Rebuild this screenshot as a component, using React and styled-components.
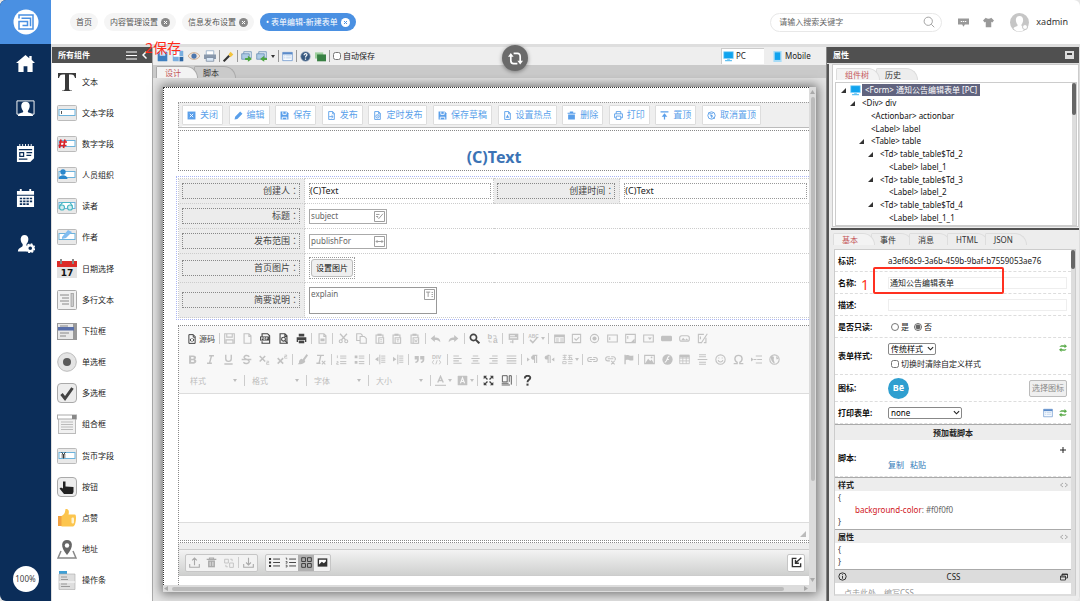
import React, {useState} from 'react';
import styled, {createGlobalStyle} from 'styled-components'

const GlobalStyle = createGlobalStyle`
  * {
    box-sizing: border-box;
  }

  body {
    margin: 0;
    background-color: #e6e6e6;
    color: #222;
    font-family: "Noto Sans", "Noto Sans CJK SC", sans-serif;
    font-size: 8px;
    line-height: 12px;
  }

  button, input, select, textarea {
    font: inherit;
    color: inherit;
    margin: 0;
    padding: 0;
  }

  button {
    border: none;
    background: none;
    white-space: nowrap;
    cursor: pointer;
  }

  svg {
    display: block;
    flex: none;
  }
`

/* ---------- shell ---------- */

const Shell = styled.div`
  display: flex;
  height: 100vh;
  overflow: hidden;
  border-radius: 6px;
  background-color: #dedede;
`

const Rail = styled.nav`
  flex: 0 0 51px;
  display: flex;
  flex-direction: column;
  align-items: center;
  background-color: #0b2d59;
`

const Logo = styled.div`
  width: 100%;
  height: 44px;
  display: flex;
  justify-content: center;
  align-items: center;
  background-color: #4a90e2;
`

const RailMenu = styled.div`
  flex: 1;
  display: flex;
  flex-direction: column;
  gap: 20px;
  padding-top: 7px;
`

const RailButton = styled.button`
  height: 25px;
  color: #fff;
`

const Zoom = styled.button`
  width: 26px;
  height: 26px;
  margin-bottom: 9px;
  border-radius: 50%;
  background-color: #fff;
  color: #444;
`

const Main = styled.div`
  flex: 1;
  min-width: 0;
  display: flex;
  flex-direction: column;
`

const Header = styled.header`
  height: 44px;
  display: flex;
  align-items: center;
  padding: 0 12px 0 19px;
  background-color: #fff;
`

const PageTabs = styled.div`
  flex: 1;
  display: flex;
  gap: 6px;
`

const PageTab = styled.button`
  height: 18px;
  display: flex;
  align-items: center;
  gap: 3px;
  padding: 0 6px;
  border-radius: 9px;
  background-color: ${props => props.$active ? '#4a90e2' : '#f5f5f5'};
  color: ${props => props.$active ? '#fff' : '#555'};
`

const Search = styled.label`
  width: 172px;
  height: 19px;
  display: flex;
  align-items: center;
  padding: 0 6px 0 8px;
  border: 1px solid #e8e8e8;
  border-radius: 10px;
  color: #999;

  input {
    flex: 1;
    min-width: 0;
    border: none;
    outline: none;
    background: none;
  }

  input::placeholder {
    color: #666;
  }
`

const HeaderIcons = styled.div`
  display: flex;
  align-items: center;
  gap: 14px;
  margin: 0 16px;
  color: #999;
`

const User = styled.button`
  display: flex;
  align-items: center;
  gap: 7px;
  font-size: 9px;
  color: #333;
`

const Workspace = styled.div`
  flex: 1;
  min-height: 0;
  display: flex;
  padding-top: 3px;
`

/* ---------- palette ---------- */

const Palette = styled.aside`
  position: relative;
  flex: 0 0 101px;
  display: flex;
  flex-direction: column;
  margin-left: 1px;
  border-right: 1px solid #aaa;
  background-color: #fff;
`

const BarTitle = styled.div`
  height: 16px;
  display: flex;
  align-items: center;
  justify-content: space-between;
  padding: 0 5px 0 6px;
  background-color: #505050;
  color: #fff;
  font-weight: bold;
`

const BarActions = styled.div`
  display: flex;
  gap: 5px;
`

const PaletteList = styled.div`
  flex: 1;
  display: flex;
  flex-direction: column;
  padding: 3px 0 5px;
`

const PaletteItem = styled.button`
  flex: 1;
  display: flex;
  align-items: center;
  gap: 5px;
  padding-left: 5px;
`

const SaveMark = styled.div`
  position: absolute;
  left: 93px;
  top: -7px;
  z-index: 2;
  font-size: 14px;
  line-height: 16px;
  white-space: nowrap;
  color: #ff2a1a;
`

/* ---------- designer ---------- */

const Designer = styled.main`
  position: relative;
  flex: 1;
  min-width: 0;
  display: flex;
  flex-direction: column;
`

const Toolbar = styled.div`
  height: 18px;
  display: flex;
  align-items: center;
  background-color: #eee;
`

const ToolGroup = styled.div`
  height: 12px;
  display: flex;
  align-items: center;
  gap: 4px;
  padding: 0 3px;
  border-left: 1px solid ${props => props.$first ? 'transparent' : '#999'};
`

const Check = styled.label`
  display: flex;
  align-items: center;
  gap: 2px;

  input {
    width: 8px;
    height: 8px;
    accent-color: #666;
  }
`

const Devices = styled.div`
  display: flex;
  gap: 6px;
  margin: 0 12px 0 auto;
`

const Device = styled.button`
  height: 16px;
  display: flex;
  align-items: center;
  gap: 2px;
  width: ${props => props.$active ? '43px' : '44px'};
  padding-left: 2px;
  background-color: ${props => props.$active ? '#fff' : 'transparent'};
  box-shadow: ${props => props.$active ? 'inset 1px 1px 0 #ccc' : 'none'};
`

const Refresh = styled.button`
  position: absolute;
  left: 349px;
  top: -2px;
  width: 26px;
  height: 26px;
  border-radius: 50%;
  background-color: #6a6a6a;
  box-shadow: 0 1px 4px rgba(0, 0, 0, .4);
  color: #fff;
  display: flex;
  align-items: center;
  justify-content: center;
`

const Tabs = styled.div`
  height: 13px;
  flex: none;
  display: flex;
  align-items: flex-end;
  padding-left: ${props => props.$dark ? '3px' : '1px'};
  background-color: ${props => props.$dark ? '#cacaca' : 'transparent'};
`

const Tab = styled.button`
  height: 12px;
  min-width: 42px;
  padding: 0 10px 0 8px;
  margin-right: -4px;
  border: 1px solid ${props => props.$dark ? '#aaa' : '#ddd'};
  border-bottom: none;
  border-radius: 2px 16px 0 0;
  background-color: ${props => props.$active ? '#f3f3f3' : props.$dark ? '#cacaca' : '#ededed'};
  color: ${props => props.$active ? '#c4565a' : '#333'};
  line-height: 11px;
  text-align: left;
  position: relative;
  z-index: ${props => props.$active ? 1 : 0};
`

const Canvas = styled.div`
  flex: 1;
  min-height: 0;
  display: flex;
  padding: 9px 10px 9px;
  background-color: #e4e4e4;
`

const Frame = styled.div`
  flex: 1;
  min-width: 0;
  display: grid;
  grid-template-columns: minmax(0, 1fr) 7px;
  grid-template-rows: minmax(0, 1fr) 7px;
  background-color: #dcdcdc;
  box-shadow: 0 0 10px 2px rgba(0, 0, 0, .5);
`

const Sheet = styled.div`
  display: flex;
  flex-direction: column;
  overflow: hidden;
  padding: 14px 0 0 14px;
  border-top: 1px dotted #333;
  border-left: 1px dotted #333;
  background-color: #fff;
`

const Track = styled.div`
  display: flex;
  flex-direction: ${props => props.$row ? 'row' : 'column'};
  align-items: center;
  padding: 3px 1px;

  svg:last-child {
    margin-top: ${props => props.$row ? '0' : 'auto'};
    margin-left: ${props => props.$row ? 'auto' : '0'};
  }
`

const Thumb = styled.div`
  flex: 0 0 ${props => props.$size};
  width: ${props => props.$row ? 'auto' : '4px'};
  height: ${props => props.$row ? '4px' : 'auto'};
  margin: ${props => props.$row ? '0 4px' : '3px 0'};
  border-radius: 2px;
  background-color: #bbb;
`

const ActionBar = styled.div`
  height: 26px;
  flex: none;
  padding: 2px 3px 0;
  overflow: hidden;
  border-top: 1px dotted #999;
  border-left: 1px dotted #999;
  border-bottom: 1px solid #bbb;
  background-color: #efefef;
`

const Actions = styled.div`
  max-width: 579px;
  display: flex;
  justify-content: space-between;
`

const ActionButton = styled.button`
  height: 20px;
  display: flex;
  align-items: center;
  gap: 4px;
  padding: 0 4px;
  border: 1px solid #ddd;
  border-radius: 1px;
  background-color: #fff;
  color: #5a9fea;
  font-size: 9px;
`

const NextRow = styled.div`
  width: 58px;
  height: 4px;
  margin-top: 1px;
  background-color: #fff;
`

const TitleBox = styled.h1`
  height: 41px;
  flex: none;
  margin: 2px 0 0;
  padding-top: 16px;
  border: 1px dotted #888;
  border-right: none;
  text-align: center;
  font-size: 16px;
  line-height: 20px;
  color: #3b73b5;
`

const TableFrame = styled.div`
  margin: 5px 0 0 -2px;
  padding: 1px 0 1px 1px;
  border: 1px dotted #a9b5f5;
  border-right: none;
`

const FormTable = styled.table`
  width: 100%;
  table-layout: fixed;
  border-collapse: collapse;
`

const FormRow = styled.tr`
  height: ${props => props.$height};
`

const LabelCell = styled.th`
  width: 20%;
  padding: 0 4px 0 3px;
  border: 1px dotted #ccc;
  background-color: #ececec;
  font-weight: normal;
`

const ValueCell = styled.td`
  padding: 0 2px 0 4px;
  border: 1px dotted #ccc;
  border-right: none;
`

const FieldLabel = styled.div`
  height: 16px;
  border: 1px dotted #888;
  text-align: right;
  font-size: 9px;
  line-height: 14px;
  color: #444;
`

/* the colon sits in the middle of its square */
const Colon = styled.span`
  font-family: "Noto Sans CJK TC", sans-serif;
  line-height: 12px;
`

const TextBox = styled.div`
  height: 16px;
  border: 1px dotted #999;
  font-size: 9px;
  line-height: 14px;
`

const Field = styled.div`
  width: ${props => props.$wide ? '128px' : '78px'};
  height: ${props => props.$wide ? '27px' : '15px'};
  display: flex;
  align-items: flex-start;
  border: 1px solid ${props => props.$wide ? '#999' : '#aaa'};
  padding: 1px;
  color: #666;

  input, textarea {
    flex: 1;
    min-width: 0;
    height: 10px;
    border: none;
    outline: none;
    resize: none;
    overflow: hidden;
    background: none;
    line-height: 10px;
  }
`

const PictureBox = styled.div`
  display: inline-block;
  vertical-align: middle;
  padding: 1px;
  border: 1px dotted #999;

  button {
    height: 18px;
    padding: 0 4px;
    border: 1px solid #bbb;
    border-radius: 3px;
    background-color: #efefef;
    line-height: 16px;
    color: #111;
  }
`

/* ---------- rich text editor ---------- */

const Editor = styled.div`
  margin-top: 5px;
  flex: none;
  border: 1px dotted #888;
  border-right: none;
`

const EditorTools = styled.div`
  padding: 2px 0 2px 5px;
  border-bottom: 1px solid #ddd;
  background-color: #f8f8f8;
`

const EditorRow = styled.div`
  height: 21px;
  max-width: ${props => props.$max || 'none'};
  display: flex;
  align-items: center;
`

const EditorButton = styled.button`
  width: 18px;
  height: 18px;
  display: flex;
  align-items: center;
  justify-content: center;
  color: ${props => props.$on ? '#444' : '#c2c2c2'};
`

const SourceButton = styled.button`
  height: 18px;
  width: 34px;
  flex: none;
  display: flex;
  align-items: center;
  gap: 2px;
  padding-left: 3px;
  color: #444;
`

const ColorButton = styled.button`
  width: 22px;
  height: 18px;
  display: flex;
  align-items: center;
  gap: 2px;
  padding-left: 3px;
  color: #c2c2c2;
`

const EditorSep = styled.span`
  flex: none;
  width: 1px;
  height: 11px;
  margin: 0 1px;
  background-color: #ccc;
`

const EditorCombo = styled.button`
  width: 59px;
  display: flex;
  align-items: center;
  justify-content: space-between;
  padding: 0 6px;
  color: #bdbdbd;
`

const EditorBody = styled.div`
  height: 128px;
  background-color: #fff;
`

const EditorStatus = styled.div`
  height: 18px;
  display: flex;
  align-items: flex-end;
  justify-content: flex-end;
  padding: 3px;
  border-top: 1px solid #ddd;
  background-color: #f8f8f8;
`

const Attachments = styled.div`
  flex: 1 0 42px;
  margin-top: 1px;
  padding-top: 6px;
  border-top: 1px dotted #888;
  border-left: 1px dotted #888;
  background: linear-gradient(#ededed 33px, #fff 33px);
`

const AttachBar = styled.div`
  height: 27px;
  display: flex;
  align-items: center;
  gap: 7px;
  padding: 0 4px 0 6px;
  border-top: 1px solid #ccc;
  border-bottom: 1px solid #ccc;
  background: linear-gradient(#f3f3f3, #cfd0cf);
`

const AttachGroup = styled.div`
  height: 18px;
  display: flex;
  align-items: center;
  border: 1px solid #c6c6c6;
  border-radius: 2px;
  background-color: #f2f2f2;

  &:last-child {
    margin-left: auto;
    background-color: #fff;
  }
`

const AttachButton = styled.button`
  width: ${props => props.$loose ? '17px' : '16px'};
  height: 16px;
  display: flex;
  align-items: center;
  justify-content: center;
  color: ${props => props.$off ? '#aaa' : '#333'};
  background-color: ${props => props.$active ? '#b0b0b0' : 'transparent'};
`

/* ---------- properties ---------- */

const Inspector = styled.aside`
  flex: 0 0 254px;
  display: flex;
  flex-direction: column;
  padding-right: 1px;
  border-left: 1px solid #888;
`

const InspectorBody = styled.div`
  flex: 1;
  min-height: 0;
  display: flex;
  flex-direction: column;
  margin-top: 1px;
  padding-left: 3px;
  border-left: 2px solid #555;
  background-color: #ededed;
`

const TreePane = styled.div`
  height: 163px;
  flex: none;
  padding: 2px 1px 2px 2px;
  border: 1px solid #ccc;
  background-color: #fff;
`

const TreeBox = styled.div`
  height: 144px;
  display: flex;
  margin-top: 2px;
  border: 1px solid #ccc;
`

const Tree = styled.ul`
  flex: 1;
  display: flex;
  flex-direction: column;
  margin: 0;
  padding: 1px 0;
  list-style: none;
`

const TreeNode = styled.li`
  flex: 1;
  display: flex;
  align-items: center;
  gap: 7px;
  padding-left: ${props => props.$level * 9 + 5}px;
  white-space: nowrap;
  color: #111;

  svg + svg {
    margin-left: -3px;
  }
`

const TreeLabel = styled.span`
  padding: ${props => props.$selected ? '0 3px' : '0'};
  margin-left: ${props => props.$selected ? '-6px' : '0'};
  background-color: ${props => props.$selected ? '#61647f' : 'transparent'};
  color: ${props => props.$selected ? '#fff' : 'inherit'};
`

const ThinTrack = styled.div`
  flex: 0 0 4px;
  background-color: #ddd;
`

const ThinThumb = styled.div`
  height: ${props => props.$size};
  border-radius: 2px;
  background-color: #666;
`

const Divider = styled.div`
  height: 2px;
  flex: none;
  margin: 1px 0 2px -1px;
  background-color: #505050;
`

const PropBox = styled.div`
  flex: 1;
  min-height: 0;
  display: flex;
  margin: 4px 3px 5px 2px;
  border: 1px solid #ccc;
  border-bottom: 2px solid #ddd;
  background-color: #fff;
`

const Props = styled.div`
  flex: 1;
  min-width: 0;
  overflow: hidden;
`

const PropRow = styled.div`
  position: relative;
  height: ${props => props.$height || '22px'};
  display: grid;
  grid-template-columns: 50px minmax(0, 1fr) auto;
  align-items: center;
  padding: 0 4px 0 3px;
  border-bottom: 1px dashed #ddd;
`

const PropName = styled.span`
  font-weight: bold;
  white-space: nowrap;
  color: #111;
`

const PropInput = styled.input`
  width: 100%;
  height: 12px;
  border: 1px solid #eee;
  padding-left: 1px;
`

const Stack = styled.div`
  display: flex;
  flex-direction: column;
  align-items: flex-start;
  gap: 3px;
`

const Radios = styled.div`
  display: flex;
  gap: 5px;
  padding-left: 3px;
`

const SelectWrap = styled.div`
  width: ${props => props.$width};
  display: grid;
  align-items: center;

  select {
    grid-area: 1 / 1;
    height: 12px;
    padding-left: 2px;
    appearance: none;
    border: 1px solid #888;
    border-radius: 2px;
    background-color: #fff;
    line-height: 10px;
    color: #000;
  }

  svg {
    grid-area: 1 / 1;
    justify-self: end;
    margin-right: 2px;
    pointer-events: none;
  }
`

const RowIcons = styled.div`
  display: flex;
  align-items: center;
  gap: 6px;
`

const RowSwap = styled.div`
  align-self: start;
  padding-top: 6px;
`

const Avatar = styled.div`
  width: 21px;
  height: 21px;
  border-radius: 50%;
  background-color: #2f9fd0;
  color: #fff;
  font-size: 9px;
  font-weight: bold;
  line-height: 20px;
  text-align: center;
`

const PickButton = styled.button`
  height: 17px;
  padding: 0 2px;
  border: 1px solid #bbb;
  border-radius: 2px;
  background-color: #efefef;
  color: #888;
`

const Links = styled.div`
  display: flex;
  gap: 6px;
  padding-top: 14px;

  a {
    color: #337ab7;
    text-decoration: none;
  }
`

const PlusButton = styled.button`
  align-self: start;
  padding-top: 6px;
`

const Section = styled.div`
  height: ${props => props.$center ? '16px' : '14px'};
  display: flex;
  align-items: center;
  justify-content: ${props => props.$center ? 'center' : 'space-between'};
  padding: 0 3px;
  border-top: 1px solid #aaa;
  background-color: ${props => props.$dark ? '#dcdcdc' : '#ededed'};
  font-weight: ${props => props.$dark ? 'normal' : 'bold'};
`

const Code = styled.div`
  padding: 1px 3px;
  line-height: 12px;
  color: #444;
`

const CodeLine = styled.div`
  padding-left: 17px;
  color: #666;

  span {
    color: #d0161b;
  }
`

const Hint = styled.div`
  padding: 4px 9px 0;
  color: #999;
`

const NameMark = styled.div`
  position: absolute;
  left: 38px;
  top: -5px;
  width: 131px;
  height: 27px;
  border: 2px solid #ff3020;
  border-radius: 2px;
  pointer-events: none;
`

const NameNumber = styled.div`
  position: absolute;
  left: 26px;
  top: 5px;
  font-size: 14px;
  line-height: 16px;
  color: #ff3020;
`

/* ---------- drawings ---------- */

const Svg = ({size = 11, box = 16, children, ...rest}) => (
    <svg width={size} height={size} viewBox={`0 0 ${box} ${box}`} fill="none" stroke="currentColor"
         strokeWidth="1.6" {...rest}>{children}</svg>
)

const Caret = ({color = 'currentColor'}) => (
    <svg width="4" height="3" viewBox="0 0 4 3"><path d="M0 0h4L2 3z" fill={color}/></svg>
)

const solid = {fill: 'currentColor', stroke: 'none'}
const glyph = {
    fill: 'currentColor', stroke: 'none', textAnchor: 'middle', fontFamily: 'Liberation Sans', fontWeight: 'bold'
}
const page = <path d="M3 1h7l3 3v11H3zM10 1v4h3"/>
const clip = <><path d="M3 3h10v12H3z"/><path d="M5 1h6v3H5z" {...solid}/></>

const editorIcons = {
    source: <>{page}<path d="M7 7L5 9.500l2 2.500M9 7l2 2.500L9 12"/></>,
    save: <><path d="M1 1h14v14H1zM4 1v5h8V1M3 15v-5h10v5"/></>,
    blank: page,
    pdf: <><path d="M3 6V1h8l3 3v11H3v-3"/><path d="M0 5h13v6H0z" {...solid}/><path d="M2 10V6.500h1.500v1.500H2M5.500 6.500v3h1.500v-3zM9 10V6.500h2M9 8h2" stroke="#f8f8f8" strokeWidth="1"/></>,
    preview: <>{page}<circle cx="8" cy="9" r="2.800"/><path d="M10 11l4 4"/></>,
    print: <><path d="M1 6h14v7h-2v-3H3v3H1zM4 1h8v4H4z" {...solid}/><path d="M4 11h8v4H4z" {...solid}/></>,
    template: <>{page}<path d="M5 8h6v4H5z" {...solid}/></>,
    cut: <><circle cx="4" cy="12" r="2.200"/><circle cx="12" cy="12" r="2.200"/><path d="M5 10l8-9M11 10L3 1" strokeWidth="2"/></>,
    copy: <><path d="M1 1h6l2 2v8H1z"/><path d="M6 5h6l3 3v7H6z" fill="#f8f8f8"/></>,
    paste: <>{clip}<path d="M7 7h7v8H7z" fill="#f8f8f8"/><path d="M9 9.500h3M9 12h3" strokeWidth="1"/></>,
    pasteText: <>{clip}<path d="M6 7h8v8H6z" fill="#f8f8f8"/><path d="M8 9h4M10 9v4" strokeWidth="1.200"/></>,
    pasteWord: <>{clip}<path d="M6 7h8v8H6z" fill="#f8f8f8"/><path d="M8 9l1 4 1-3 1 3 1-4" strokeWidth="1"/></>,
    undo: <path d="M1 8l6-5v3.500c5 0 8 2 8 7-2-3-4-3.500-8-3.500V13z" {...solid}/>,
    redo: <path d="M15 8L9 3v3.500c-5 0-8 2-8 7 2-3 4-3.500 8-3.500V13z" {...solid}/>,
    find: <><circle cx="6.500" cy="6.500" r="4.500" strokeWidth="2.400"/><path d="M10 10l5 5" strokeWidth="3"/></>,
    replace: <><text x="4" y="8" fontSize="11" {...glyph}>b</text><text x="12" y="15" fontSize="12" {...glyph}>a</text><path d="M3 10v3h4M9 4h4v3" strokeWidth="1.200"/></>,
    selectAll: <><path d="M1 1h14v9H1z" {...solid}/><path d="M3 4h7M3 7h10" stroke="#f8f8f8"/><path d="M7 10v5M3 13h5"/></>,
    spell: <><text x="8" y="7" fontSize="7" {...glyph}>ABC</text><path d="M3 10l4 4 7-8" strokeWidth="2.200"/></>,
    form: <><path d="M1 3h14v11H1z"/><path d="M1 3h14v3H1zM3 8h4v1.500H3zM3 11h4v1.500H3zM9 8h5v1.500H9zM9 11h5v1.500H9z" {...solid}/></>,
    checkbox: <><path d="M2 2h12v12H2z"/><path d="M5 8l2.500 2.500L12 6"/></>,
    radio: <><circle cx="8" cy="8" r="6"/><circle cx="8" cy="8" r="3" {...solid}/></>,
    textField: <path d="M1 3h14v10H1zM4 6v4"/>,
    textArea: <><path d="M1 2h14v12H1zM4 4.500v4"/><path d="M14 8v5H9z" {...solid}/></>,
    select: <><path d="M1 3h14v10H1z"/><path d="M7 6.500h6L10 10z" {...solid}/></>,
    button: <rect x="0" y="4" width="16" height="8" rx="2" {...solid}/>,
    imageButton: <><rect x="1" y="4" width="14" height="8" rx="3"/><path d="M3 11l3-4 3 3 2-2 3 3z" {...solid}/></>,
    hidden: <path d="M10 2H2v12h5M13 7v7h-3M15 1L6 15M5 5v4"/>,
    bold: <path d="M3 2h6c5 0 5 5 2.500 5.500C15 8.500 14 14 9.500 14H3zM6 4.300v2.500h2.500c2 0 2-2.500 0-2.500zM6 9v2.700h3c2 0 2-2.700 0-2.700z" fillRule="evenodd" {...solid}/>,
    italic: <path d="M6 2.500h7M3 13.500h7M9.500 2.500l-3 11" strokeWidth="2"/>,
    underline: <path d="M4 1v6c0 5 8 5 8 0V1M2 14.500h12" strokeWidth="2"/>,
    strike: <path d="M12 4C10 1 4 2 4.500 5S12 8 12 11s-6 4-8.500 1M1 8h14" strokeWidth="2"/>,
    sub: <><path d="M1 3l8 8M9 3l-8 8" strokeWidth="2.200"/><path d="M11 10.500h3v2h-3v2.500h4" strokeWidth="1.200"/></>,
    sup: <><path d="M1 6l8 8M9 6l-8 8" strokeWidth="2.200"/><path d="M11 1.500h3v2h-3V6h4" strokeWidth="1.200"/></>,
    brush: <path d="M14 0l2 2-5 7 1 1c0 3-5 5-11 5 1-1 2-2 2-3s0-4 4-5l1 1z" {...solid}/>,
    removeFormat: <><path d="M3 2h10M8.500 2L6 13M2 13.500h6" strokeWidth="2"/><path d="M10 10l5 5M15 10l-5 5"/></>,
    ol: <><path d="M6 3h9M6 6h9M6 11h9M6 14h9" strokeWidth="1.400"/><path d="M2 2v4M1 11h2v2H1v2h3" strokeWidth="1.200"/></>,
    ul: <><path d="M7 3h8M7 6h8M7 11h8M7 14h8" strokeWidth="1.400"/><path d="M1 2h4v4H1zM1 10h4v4H1z" {...solid}/></>,
    outdent: <><path d="M9 3h6M9 6h6M9 9h6M9 12h6M7 1v14" strokeWidth="1.400"/><path d="M5 4v7L0 7.500z" {...solid}/></>,
    indent: <><path d="M9 3h6M9 6h6M9 9h6M9 12h6M7 1v14" strokeWidth="1.400"/><path d="M0 4v7l5-3.500z" {...solid}/></>,
    quote: <path d="M1 3h6v5c0 3-2 5-5 5v-2c1.500 0 2.500-1 2.500-3H1zM9 3h6v5c0 3-2 5-5 5v-2c1.500 0 2.500-1 2.500-3H9z" {...solid}/>,
    div: <><text x="8" y="7" fontSize="8" {...glyph}>DIV</text><path d="M4 9l-2 3 2 3M12 9l2 3-2 3M9 9l-2 6" strokeWidth="1.300"/></>,
    left: <path d="M2 3h8M2 6.500h12M2 10h8M2 13.500h12"/>,
    center: <path d="M4 3h8M2 6.500h12M4 10h8M2 13.500h12"/>,
    right: <path d="M6 3h8M2 6.500h12M6 10h8M2 13.500h12"/>,
    justify: <path d="M1 3h14M1 6.500h14M1 10h14M1 13.500h14"/>,
    ltr: <><path d="M15 2H9v6M11 2v11M14 2v11"/><path d="M11 2H9c-4 0-4 6 0 6h2zM0 5v6l4-3z" {...solid}/></>,
    rtl: <><path d="M8 2H5M6 2v11M9 2v11"/><path d="M6 2H4C0 2 0 8 4 8h2zM15 5v6l-4-3z" {...solid}/></>,
    lang: <path d="M1 2h6M1 5h5M4 1v7M1 8h6M1 11h5v3H1zM9 2h6M11 2v6M9 5h5v3M8 8h8M9 11h6M9 14h6" strokeWidth="1.200"/>,
    link: <path d="M7 5H4C0 5 0 11 4 11h3M9 5h3c4 0 4 6 0 6H9M4 8h8"/>,
    unlink: <path d="M7 4H4C0 4 0 10 4 10h3M9 4h3c3 0 4 4 2 5M4 7h8M9 10l5 5M14 10l-5 5"/>,
    anchor: <path d="M2 1h2v1c4-2 6 2 11 0v7c-5 2-7-2-11 0v6H2z" {...solid}/>,
    image: <><path d="M1 2h14v12H1z"/><path d="M2 13l4-6 3 3 2-2 3 5z" {...solid}/><circle cx="11" cy="5" r="1.300" {...solid}/></>,
    flash: <><circle cx="8" cy="8" r="7.500" {...solid}/><path d="M11 3C7 3 8 12 4 12M7 8h3" stroke="#f8f8f8"/></>,
    table: <><path d="M1 2h14v12H1zM1 6h14M1 10h14M5.500 4v10M10.500 4v10" strokeWidth="1.200"/><path d="M1 1h14v4H1z" {...solid}/></>,
    hr: <path d="M3 1h10M3 4h10M1 8h14M3 12h10M3 15h10" strokeWidth="1.500"/>,
    smile: <><circle cx="8" cy="8" r="6.800"/><path d="M4.500 9c1 3.500 6 3.500 7 0M5.500 5v1.500M10.500 5v1.500"/></>,
    omega: <path d="M1 14h5v-2C1 9 2 2 8 2s7 7 2 10v2h5" strokeWidth="2"/>,
    pageBreak: <><path d="M7 3h9M9 8h7M7 13h9M4 8h4"/><path d="M0 5v6l4-3z" {...solid}/></>,
    globe: <><circle cx="8" cy="8" r="6.800"/><path d="M3 3c3 0 5 1 4 4s2 4 1 7C4 12 2 8 3 3zM10 2c1 3 3 2 4 5l-3 1z" {...solid}/></>,
    maximize: <><path d="M1 1h5L1 6zM15 1v5l-5-5zM1 15v-5l5 5zM15 15h-5l5-5z" {...solid}/><path d="M2 2l4.500 4.500M14 2L9.500 6.500M2 14l4.500-4.500M14 14L9.500 9.500" strokeWidth="2"/></>,
    blocks: <path d="M2 1h7v9H2zM12 1h3v13M12 1v9M1 12h10M1 14.500h12" strokeWidth="1.200"/>,
    help: <><path d="M4 5c0-5 8-5 8-1 0 3-4 3-4 6.500" strokeWidth="2.800"/><path d="M6.500 12.500h3v3h-3z" {...solid}/></>
}

const editorRows = [
    ['save', 'blank', 'pdf!', 'preview!', 'print!', '|', 'template', '|', 'cut', 'copy', 'paste', 'pasteText',
        'pasteWord', '|', 'undo', 'redo', '|', 'find!', 'replace', '|', 'selectAll', '|', 'spell+', '|', 'form',
        'checkbox', 'radio', 'textField', 'textArea', 'select', 'button', 'imageButton', 'hidden'],
    ['bold', 'italic', 'underline', 'strike', 'sub', 'sup', '|', 'brush', 'removeFormat', '|', 'ol', 'ul', '|',
        'outdent', 'indent', '|', 'quote', 'div', '|', 'left', 'center', 'right', 'justify', '|', 'ltr', 'rtl',
        'lang+', '|', 'link', 'unlink', 'anchor', '|', 'image', 'flash', 'table', 'hr', 'smile', 'omega',
        'pageBreak', 'globe']
]

const actionIcons = {
    close: <><rect x="1" y="1" width="14" height="14" {...solid}/><path d="M5 5l6 6M11 5l-6 6" stroke="#fff"/></>,
    edit: <path d="M1 15l1-5L11 1l4 4-9 9zM3 11l2 2" {...solid}/>,
    save: <><path d="M1 1h11l3 3v11H1z" {...solid}/><path d="M5 1v5h6V1M4 15v-4h8v4" stroke="#fff"/></>,
    publish: <>{page}<path d="M4 10h6M8 7.500l3 2.500-3 2.500"/></>,
    timer: <>{page}<circle cx="8" cy="9.500" r="3"/><path d="M8 8v2h1.500" strokeWidth="1"/></>,
    hot: <>{page}<path d="M8 6l3 6H5z" {...solid}/></>,
    remove: <path d="M1 3h4V1h6v2h4v2H1zM2 6h12v9H2z" {...solid}/>,
    print: <><path d="M4 5V1h8v4M4 12H1V5h14v7h-3"/><path d="M4 9h8v6H4z"/></>,
    top: <><path d="M1 1.500h14M8 15V6" strokeWidth="2.200"/><path d="M8 4l5 6H3z" {...solid}/></>,
    untop: <><circle cx="8" cy="8" r="6.500"/><path d="M5 4.500h6M8 13V7M2 3l12 11" strokeWidth="1.200"/><path d="M8 6l3 3.500H5z" {...solid}/></>
}

const actions = [
    ['close', '关闭'], ['edit', '编辑'], ['save', '保存'], ['publish', '发布'], ['timer', '定时发布'],
    ['save', '保存草稿'], ['hot', '设置热点'], ['remove', '删除'], ['print', '打印'], ['top', '置顶'], ['untop', '取消置顶']
]

const plate = (
    <>
        <rect x=".5" y="2.500" width="19" height="15" rx="1" fill="#e9e9e9" stroke="#bbb"/>
        <rect x="2" y="6.500" width="16" height="6" fill="#fff" stroke="#6db3dc"/>
    </>
)
const key = <rect x=".5" y=".5" width="19" height="19" rx="3.500" fill="#ededed" stroke="#aaa"/>

const paletteIcons = {
    text: <path d="M1 1h18v5h-1c-.7-2.500-1.500-3.500-4-3.500h-2V16c0 2 .5 2.500 3 2.500V19H5v-.5c2.500 0 3-.5 3-2.500V2.500H6C3.500 2.500 2.700 3.500 2 6H1z" fill="#3a3a3a"/>,
    field: <>{plate}<path d="M4.500 8v3" stroke="#555"/></>,
    number: <>{plate}<path d="M4 5.500L2.500 14M8 5.500L6.500 14M2 8h8M1.500 11.500h8" stroke="#d8232a" strokeWidth="1.700"/></>,
    people: <>{plate}<circle cx="6" cy="7" r="2.700" fill="#2b87cc"/><path d="M1.500 14c0-5 9-5 9 0z" fill="#2b87cc"/></>,
    reader: <>{plate}<g stroke="#4cb8c4" strokeWidth="1.200" fill="#d3eef1"><circle cx="5" cy="11.500" r="2.500"/><circle cx="13" cy="11.500" r="2.500"/><path d="M2.500 10l3-3.500h7.500l2.500 3.500" fill="none"/></g></>,
    author: <>{plate}<path d="M5 10l6-7 4 2-6 6-4 1z" fill="#82bdf0"/></>,
    date: <><path d="M0 3h20v16H0z" fill="#e3e3e3"/><path d="M0 2h20v6H0z" fill="#dc2b27"/><path d="M4 0v5M16 0v5" stroke="#888" strokeWidth="2"/><text x="10" y="17" fontSize="9" fontWeight="bold" textAnchor="middle" fontFamily="DejaVu Sans" fill="#111">17</text></>,
    area: <><rect x=".5" y=".5" width="19" height="19" rx="1" fill="#f1f1f1" stroke="#aaa"/><path d="M3 5h9M5 8h7M3 11h9M5 14h7" stroke="#888"/><rect x="14" y="3.500" width="2.500" height="13" fill="#ccc" stroke="#999" strokeWidth=".7"/></>,
    drop: <><rect x=".5" y="2.500" width="19" height="16" fill="#e8e8e8" stroke="#999"/><path d="M16 3h3.500v15H16z" fill="#999"/><path d="M1 6h16v3.500H1z" fill="#586ea8"/><path d="M3 5h8M3 12h9M3 15h6" stroke="#888"/></>,
    radio: <><circle cx="10" cy="10" r="9.300" fill="#e4e4e4" stroke="#bbb"/><circle cx="10" cy="10" r="4" fill="#5a5a5a"/></>,
    check: <>{key}<path d="M4.500 11l3.500 4.500L15.500 5" stroke="#444" strokeWidth="3" fill="none"/></>,
    combo: <><rect x="1.500" y="3" width="17" height="16.500" fill="#f1f1f1" stroke="#bbb"/><rect x=".5" y="1" width="19" height="4" fill="#fff" stroke="#aaa"/><path d="M15 1h4v4h-4z" fill="#888"/><path d="M4 8h12M4 10.500h12M4 13h12M4 15.500h12" stroke="#bbb"/></>,
    money: <>{plate}<path d="M4.500 6l2 3 2-3M6.500 9v3.500M4.500 9h4M4.500 11h4" stroke="#333" strokeWidth=".9" fill="none"/></>,
    button: <>{key}<path d="M6 4.500h2.500v5l8 .5v5l-1 2H7l-4.500-5.500 1.500-1 2 1z" fill="#222"/></>,
    like: <><path d="M1 8h4v10H1z" fill="#f0a040"/><path d="M4.500 8C8 6 8 4 8.500 1c3-.5 4 2 3 5.500H18c2 0 1 12-2 12H4.500z" fill="#fcc54e"/><rect x="14.500" y="9.500" width="2.500" height="6" rx="1" fill="#fff3cf"/></>,
    address: <><path d="M4 12l-3 7h18l-3-7" stroke="#888" fill="none" strokeWidth="1.500"/><path d="M10 16C3 8 4 1 10 1s7 7 0 15z" fill="#666"/><circle cx="10" cy="6.500" r="2.200" fill="#fff"/></>,
    ops: <><path d="M2 1h8v4H2z" fill="#3fa0d6"/><path d="M2 4h16v15.500H2z" fill="#dedede" stroke="#aaa" strokeWidth=".6"/><path d="M4 7h6M4 9.500h7M4 14h6M4 16.500h9" stroke="#888" strokeWidth=".8"/><path d="M2 12h16" stroke="#fff"/></>
}

const palette = [
    ['text', '文本'], ['field', '文本字段'], ['number', '数字字段'], ['people', '人员组织'], ['reader', '读者'],
    ['author', '作者'], ['date', '日期选择'], ['area', '多行文本'], ['drop', '下拉框'], ['radio', '单选框'],
    ['check', '多选框'], ['combo', '组合框'], ['money', '货币字段'], ['button', '按钮'], ['like', '点赞'],
    ['address', '地址'], ['ops', '操作条']
]

const railIcons = {
    主页: <path d="M10 1L0 9.500h2.500V19H8v-6h4v6h5.500V9.500H20L16.500 6V2H14v2.500z" fill="#fff"/>,
    用户: <><path d="M1 2h18v14H1z" fill="none" stroke="#fff"/><path d="M10 3c6 0 5 7 2.500 9.500v1.500c2 1 5 1 5.500 4H2c.5-3 3.500-3 5.500-4v-1.500C5 10 4 3 10 3z" fill="#fff"/></>,
    新闻: <><path d="M1 2h18v13l-4 4H1z" fill="#fff"/><path d="M3 6h14M11 9h6M11 12h5M3 16h9" stroke="#0b2d59" strokeWidth="1.300"/><path d="M4 9h4v4H4z" fill="#fff" stroke="#0b2d59" strokeWidth="1.300"/><path d="M4 0v3M7 0v3M10 0v3M13 0v3M16 0v3" stroke="#fff"/></>,
    日历: <><path d="M1 2h18v4H1zM1 7h18v12H1z" fill="#fff"/><path d="M5 0v4M15 0v4" stroke="#fff" strokeWidth="2"/><path d="M4 10h2.500M7.500 10H10M11 10h2.500M14.500 10H17M4 13h2.500M7.500 13H10M11 13h2.500M14.500 13H17M4 16h2.500M7.500 16H10M11 16h2.500" stroke="#0b2d59" strokeWidth="1.800"/></>,
    账户: <><path d="M9 1c5 0 5 7 2 9.500v1.500l1 1c-1 2 0 4 1 5.500H2c0-4 3-4 5-6v-2C4 8 4 1 9 1z" fill="#fff"/><circle cx="15" cy="15" r="3" fill="none" stroke="#fff" strokeWidth="2.200"/><circle cx="15" cy="15" r="4.500" fill="none" stroke="#fff" strokeWidth="1.500" strokeDasharray="2 1.530"/></>
}

const tools = {
    save: <><rect x="1" y="1" width="14" height="14" rx="1" fill="#3e7fc0"/><path d="M4 1h8v6H4z" fill="#cfe3f5"/></>,
    saveAs: <><rect x="1" y="1" width="14" height="14" rx="1" fill="#79aee0"/><path d="M2 2h8v7H2zM9 8h6v7H9z" fill="#fff"/><path d="M10 9h5v6h-5z" fill="#2c66a3"/></>,
    eye: <><path d="M0 8c4-6 12-6 16 0-4 6-12 6-16 0z" fill="#f2e6dc" stroke="#c39b7b"/><circle cx="8" cy="8" r="3.500" fill="#4d76ad"/></>,
    print: <><path d="M3 1h10v6H3z" fill="#fff" stroke="#8aa4c0"/><path d="M0 6h16v6H0z" fill="#8a99ac"/><path d="M3 10h10v5H3z" fill="#d9e7f5" stroke="#718399"/></>,
    wand: <><path d="M1 15l8-8" stroke="#333" strokeWidth="3"/><path d="M8 5l3-4 4 4-4 4z" fill="#f2c33d"/></>,
    next: <><path d="M4 1h11v9H4z" fill="#dfe9f3" stroke="#5b84ae"/><path d="M1 4h11v8H1z" fill="#aecbe5" stroke="#5b84ae"/><path d="M6 10h4V7l6 4.500-6 4V13H6z" fill="#4da643"/></>,
    prev: <><path d="M4 1h11v9H4z" fill="#dfe9f3" stroke="#5b84ae"/><path d="M1 4h11v8H1z" fill="#aecbe5" stroke="#5b84ae"/><path d="M16 10h-4V7l-6 4.500 6 4V13h4z" fill="#4da643"/></>,
    form: <><path d="M1 2h14v12H1z" fill="#f7fbff" stroke="#5b8bc9"/><path d="M1 2h14v3H1z" fill="#5b8bc9"/><path d="M3 7h2M3 10h2M6 7h7M6 10h7" stroke="#a9c3e2"/></>,
    help: <><circle cx="8" cy="8" r="7" fill="#36587f" stroke="#a9b6c6"/><path d="M6 6c0-3 5-2.500 4 0-.5 1.300-2 1.300-2 3.500M8 11v1.800" stroke="#fff" strokeWidth="1.800" fill="none"/></>,
    stack: <><path d="M0 2h12v9H0z" fill="#9fd09f"/><path d="M3 5h13v10H3z" fill="#388043"/></>,
    pc: <><path d="M1 1h14v10H1z" fill="#10a3ee" stroke="#8fd6fa"/><path d="M6 12h4v1h3v2H3v-2h3z" fill="#62c1f2"/></>,
    mobile: <><path d="M2 0h12v16H2z" fill="#a7dcf7"/><path d="M4 2h8v11H4z" fill="#10a3ee"/></>,
    swap: <><path d="M1 6c1-4 6-4 10-3V0l5 4.500-5 4V6C7 5 4 5 1 6z" fill="#5aab4a"/><path d="M15 10c-1 4-6 4-10 3v3l-5-4.500 5-4V10c4 1 7 1 10 0z" fill="#5aab4a"/></>
}

const Tool = ({name, size = 11}) => <Svg size={size} stroke="none" strokeWidth="1">{tools[name]}</Svg>

const attachIcons = {
    up: <path d="M1 10v5h14v-5M8 12V2M4.500 5L8 1.500 11.500 5"/>,
    trash: <><path d="M1 3.500h14M5 3V1.500h6V3"/><path d="M3 5h10v10H3z" {...solid}/><path d="M6 7v6M10 7v6" stroke="#f2f2f2" strokeWidth="1.200"/></>,
    swap: <path d="M1 2h6v6H1zM9 8h6v7H9zM10 2h3v3M3 11v3h3"/>,
    down: <path d="M1 10v5h14v-5M8 1v10M4.500 8L8 11.500 11.500 8"/>,
    ul: <><path d="M6 3h10M6 8h10M6 13h10" strokeWidth="1.300"/><path d="M0 1.500h3v3H0zM0 6.500h3v3H0zM0 11.500h3v3H0z" {...solid}/></>,
    ol: <><path d="M6 3h10M6 8h10M6 13h10" strokeWidth="1.300"/><path d="M1 1.500h1.500V4M1 6.500h2V9H1M1 12h2v2.500H1" strokeWidth="1"/></>,
    grid: <path d="M1 1h5.500v5.500H1zM9.500 1H15v5.500H9.500zM1 9.500h5.500V15H1zM9.500 9.500H15V15H9.500z" strokeWidth="1.300"/>,
    image: <><path d="M1 2h14v12H1z" {...solid}/><path d="M3 4h10v2L10 9 7 7l-4 4z" fill="#fff" stroke="none"/></>,
    shrink: <path d="M8 2H2v12h12V9M15 1L7 8.500M6.500 4v5h5" strokeWidth="2"/>
}

const treeNodes = [
    [0, '<Form> 通知公告编辑表单 [PC]', true], [1, '<Div> div', true], [2, '<Actionbar> actionbar'],
    [2, '<Label> label'], [2, '<Table> table', true], [3, '<Td> table_table$Td_2', true], [4, '<Label> label_1'],
    [3, '<Td> table_table$Td_3', true], [4, '<Label> label_2'], [3, '<Td> table_table$Td_4', true],
    [4, '<Label> label_1_1']
]

/* ---------- parts ---------- */

const CloseDot = ({active}) => (
    <svg width="9" height="9" viewBox="0 0 18 18">
        <circle cx="9" cy="9" r="9" fill={active ? '#fff' : '#888'}/>
        <path d="M6 6l6 6M12 6l-6 6" stroke={active ? '#4a90e2' : '#fff'} strokeWidth="2"/>
    </svg>
)

const Choice = ({options, width, label}) => (
    <SelectWrap $width={width}>
        <select aria-label={label}>
            {options.map(o => <option key={o}>{o}</option>)}
        </select>
        <svg width="7" height="7" viewBox="0 0 8 8"><path d="M1 2.500l3 3 3-3" fill="none" stroke="#222" strokeWidth="1.300"/></svg>
    </SelectWrap>
)

const FormLabel = ({children}) => (
    <LabelCell scope="row"><FieldLabel>{children}<Colon>：</Colon></FieldLabel></LabelCell>
)

const FieldIcon = ({children}) => (
    <Svg size={11} stroke="#999" strokeWidth="1.400"><path d="M.7.700h14.600v14.600H.700z"/>{children}</Svg>
)

const TopHeader = () => (
    <Header>
        <PageTabs>
            <PageTab>首页</PageTab>
            <PageTab>内容管理设置<CloseDot/></PageTab>
            <PageTab>信息发布设置<CloseDot/></PageTab>
            <PageTab $active>• 表单编辑-新建表单<CloseDot active/></PageTab>
        </PageTabs>
        <Search>
            <input placeholder="请输入搜索关键字" aria-label="搜索"/>
            <Svg size={12} strokeWidth="1.200"><circle cx="7" cy="7" r="5.500"/><path d="M11 11l4 4"/></Svg>
        </Search>
        <HeaderIcons>
            <Svg><path d="M0 2h16v9H10l-2 3-2-3H0z" {...solid}/><path d="M4 6.500h2M7 6.500h2M10 6.500h2" stroke="#fff"/></Svg>
            <Svg><path d="M4 1c2 2 6 2 8 0l4 4-2.500 3L12 7v8H4V7L2.500 8 0 5z" {...solid}/></Svg>
        </HeaderIcons>
        <User>
            <svg width="19" height="19" viewBox="0 0 19 19">
                <circle cx="9.500" cy="9.500" r="9.500" fill="#c6c6c6"/>
                <path d="M9.500 3c5 0 4 7 2 8.500v1.500c2 .5 3.500 1 4 2.500-3 4-9 4-12 0 .5-1.500 2-2 4-2.500v-1.500C5.500 10 4.500 3 9.500 3z" fill="#fff"/>
                <circle cx="15" cy="14" r="2.500" fill="#fff" stroke="#c6c6c6"/>
            </svg>
            xadmin
        </User>
    </Header>
)

const FormArea = () => (
    <TableFrame>
        <FormTable>
            <tbody>
            <FormRow $height="25px">
                <FormLabel>创建人</FormLabel>
                <ValueCell><TextBox>(C)Text</TextBox></ValueCell>
                <FormLabel>创建时间</FormLabel>
                <ValueCell><TextBox>(C)Text</TextBox></ValueCell>
            </FormRow>
            <FormRow $height="25px">
                <FormLabel>标题</FormLabel>
                <ValueCell colSpan="3">
                    <Field>
                        <input defaultValue="subject" aria-label="标题"/>
                        <FieldIcon><path d="M5 9l2 2 6-7M3 5h5M3 8h3"/></FieldIcon>
                    </Field>
                </ValueCell>
            </FormRow>
            <FormRow $height="25px">
                <FormLabel>发布范围</FormLabel>
                <ValueCell colSpan="3">
                    <Field>
                        <input defaultValue="publishFor" aria-label="发布范围"/>
                        <FieldIcon><path d="M3 8h10M5 6L3 8l2 2M11 6l2 2-2 2"/></FieldIcon>
                    </Field>
                </ValueCell>
            </FormRow>
            <FormRow $height="29px">
                <FormLabel>首页图片</FormLabel>
                <ValueCell colSpan="3"><PictureBox><button>设置图片</button></PictureBox></ValueCell>
            </FormRow>
            <FormRow $height="35px">
                <FormLabel>简要说明</FormLabel>
                <ValueCell colSpan="3">
                    <Field $wide>
                        <textarea defaultValue="explain" aria-label="简要说明"/>
                        <FieldIcon><path d="M3 4.500h6M6 4.500v7M11 5h2M11 8h2M11 11h2"/></FieldIcon>
                    </Field>
                </ValueCell>
            </FormRow>
            </tbody>
        </FormTable>
    </TableFrame>
)

const editorItem = (item, i) => {
    if (item === '|') return <EditorSep key={i}/>
    const name = item.replace(/[!+]/, '')
    const icon = <Svg>{editorIcons[name]}</Svg>
    return item.endsWith('+')
        ? <ColorButton key={i} title={name}>{icon}<Caret/></ColorButton>
        : <EditorButton key={i} title={name} $on={item.endsWith('!')}>{icon}</EditorButton>
}

const RichEditor = () => (
    <Editor>
        <EditorTools>
            <EditorRow $max="527px">
                <SourceButton><Svg size={10}>{editorIcons.source}</Svg>源码</SourceButton>
                <EditorSep/>
                {editorRows[0].map(editorItem)}
            </EditorRow>
            <EditorRow $max="599px">{editorRows[1].map(editorItem)}</EditorRow>
            <EditorRow>
                {['样式', '格式', '字体', '大小'].map(name =>
                    <React.Fragment key={name}>
                        <EditorCombo>{name}<Caret/></EditorCombo>
                        <EditorSep/>
                    </React.Fragment>
                )}
                <ColorButton title="color"><Svg><path d="M4 11L8 2l4 9M5.500 8h5" strokeWidth="2"/><path d="M0 15h16"/></Svg><Caret/></ColorButton>
                <ColorButton title="background"><Svg><rect x="1" y="1" width="14" height="14" rx="1" {...solid}/><path d="M5 12l3-8 3 8M6 9.500h4" stroke="#f8f8f8"/></Svg><Caret/></ColorButton>
                <EditorSep/>
                {['maximize!', 'blocks!', '|', 'help!'].map(editorItem)}
            </EditorRow>
        </EditorTools>
        <EditorBody/>
        <EditorStatus>
            <svg width="6" height="6" viewBox="0 0 6 6"><path d="M6 0v6H0z" fill="#bbb"/></svg>
        </EditorStatus>
    </Editor>
)

const AttachmentArea = () => (
    <Attachments>
        <AttachBar>
            <AttachGroup>
                <AttachButton $off $loose title="上传"><Svg>{attachIcons.up}</Svg></AttachButton>
                <AttachButton $off $loose title="删除"><Svg>{attachIcons.trash}</Svg></AttachButton>
                <AttachButton $off $loose title="替换"><Svg size={10} opacity=".6">{attachIcons.swap}</Svg></AttachButton>
                <EditorSep/>
                <AttachButton $off $loose title="下载"><Svg>{attachIcons.down}</Svg></AttachButton>
            </AttachGroup>
            <AttachGroup>
                {['ul', 'ol', 'grid', 'image'].map(name =>
                    <AttachButton key={name} title={name} $active={name === 'grid'}><Svg>{attachIcons[name]}</Svg></AttachButton>
                )}
            </AttachGroup>
            <AttachGroup>
                <AttachButton title="收起"><Svg>{attachIcons.shrink}</Svg></AttachButton>
            </AttachGroup>
        </AttachBar>
    </Attachments>
)

const TreePanel = () => (
    <TreePane>
        <Tabs>
            <Tab $active>组件树</Tab>
            <Tab>历史</Tab>
        </Tabs>
        <TreeBox>
            <Tree>
                {treeNodes.map(([level, text, open], i) =>
                    <TreeNode key={text} $level={level}>
                        <svg width="5" height="5" viewBox="0 0 5 5">{open && <path d="M5 0v5H0z" fill="#333"/>}</svg>
                        {i === 0 && <Tool name="pc"/>}
                        <TreeLabel $selected={i === 0}>{text}</TreeLabel>
                    </TreeNode>
                )}
            </Tree>
            <ThinTrack><ThinThumb $size="32px"/></ThinTrack>
        </TreeBox>
    </TreePane>
)

const PropertyPanel = () => {
    const [readOnly, setReadOnly] = useState('no')

    return (
        <PropBox>
            <Props>
                <PropRow><PropName>标识:</PropName><span>a3ef68c9-3a6b-459b-9baf-b7559053ae76</span></PropRow>
                <PropRow>
                    <PropName>名称:</PropName>
                    <PropInput defaultValue="通知公告编辑表单" aria-label="名称"/>
                    <NameNumber>1</NameNumber>
                    <NameMark/>
                </PropRow>
                <PropRow><PropName>描述:</PropName><PropInput aria-label="描述"/></PropRow>
                <PropRow>
                    <PropName>是否只读:</PropName>
                    <Radios>
                        <Check><input type="radio" name="ro" checked={readOnly === 'yes'} onChange={() => setReadOnly('yes')}/>是</Check>
                        <Check><input type="radio" name="ro" checked={readOnly === 'no'} onChange={() => setReadOnly('no')}/>否</Check>
                    </Radios>
                </PropRow>
                <PropRow $height="37px">
                    <PropName>表单样式:</PropName>
                    <Stack>
                        <Choice label="表单样式" width="48px" options={['传统样式']}/>
                        <Radios><Check><input type="checkbox"/>切换时清除自定义样式</Check></Radios>
                    </Stack>
                    <RowSwap><Tool name="swap" size={8}/></RowSwap>
                </PropRow>
                <PropRow $height="27px">
                    <PropName>图标:</PropName>
                    <Avatar>Bē</Avatar>
                    <PickButton>选择图标</PickButton>
                </PropRow>
                <PropRow>
                    <PropName>打印表单:</PropName>
                    <Choice label="打印表单" width="74px" options={['none']}/>
                    <RowIcons><Tool name="form" size={10}/><Tool name="swap" size={8}/></RowIcons>
                </PropRow>
                <Section $center>预加载脚本</Section>
                <PropRow $height="37px">
                    <PropName>脚本:</PropName>
                    <Links><a href="#copy">复制</a><a href="#paste">粘贴</a></Links>
                    <PlusButton title="添加"><Svg size={8}><path d="M8 2v12M2 8h12" strokeWidth="2"/></Svg></PlusButton>
                </PropRow>
                <Section>样式<Svg size={8} stroke="#999"><path d="M6 4L1 8l5 4M10 4l5 4-5 4"/></Svg></Section>
                <Code>
                    {'{'}
                    <CodeLine><span>background-color</span>: #f0f0f0</CodeLine>
                    {'}'}
                </Code>
                <Section>属性<Svg size={8} stroke="#999"><path d="M6 4L1 8l5 4M10 4l5 4-5 4"/></Svg></Section>
                <Code>{'{'}<br/>{'}'}</Code>
                <Section $dark>
                    <Svg size={9}><circle cx="8" cy="8" r="6.500"/><path d="M8 7v5M8 4v1.500"/></Svg>
                    CSS
                    <Svg size={8}><path d="M1 6h10v8H1zM4 6V2h11v8h-4M1 8h10M4 3h11"/></Svg>
                </Section>
                <Hint>点击此处，编写CSS</Hint>
            </Props>
            <ThinTrack><ThinThumb $size="19px"/></ThinTrack>
        </PropBox>
    )
}

export default function App() {
    return (
        <Shell>
            <GlobalStyle/>
            <Rail>
                <Logo>
                    <svg width="26" height="26" viewBox="0 0 26 26">
                        <circle cx="13" cy="13" r="12.500" fill="#fff"/>
                        <path d="M6 9.500V6h14v14H6v-7.500h8.500v4H9.500M8.500 9.200h9v8" fill="none" stroke="#4a90e2" strokeWidth="1.500"/>
                    </svg>
                </Logo>
                <RailMenu>
                    {Object.keys(railIcons).map(name =>
                        <RailButton key={name} title={name}>
                            <svg width="19" height="19" viewBox="0 0 20 20">{railIcons[name]}</svg>
                        </RailButton>
                    )}
                </RailMenu>
                <Zoom>100%</Zoom>
            </Rail>
            <Main>
                <TopHeader/>
                <Workspace>
                    <Palette>
                        <BarTitle>
                            所有组件
                            <BarActions>
                                <Svg><path d="M0 3h16M0 8h16M0 13h16"/></Svg>
                                <svg width="5" height="10" viewBox="0 0 5 10"><path d="M4.500 1.500L1 5l3.500 3.500" fill="none" stroke="#fff" strokeWidth="1.500"/></svg>
                            </BarActions>
                        </BarTitle>
                        <PaletteList>
                            {palette.map(([icon, name]) =>
                                <PaletteItem key={name}>
                                    <svg width="20" height="20" viewBox="0 0 20 20">{paletteIcons[icon]}</svg>
                                    {name}
                                </PaletteItem>
                            )}
                        </PaletteList>
                        <SaveMark>2保存</SaveMark>
                    </Palette>

                    <Designer>
                        <Toolbar>
                            <ToolGroup $first>
                                <Tool name="save"/><Tool name="saveAs" size={12}/><Tool name="eye" size={12}/><Tool name="print" size={12}/>
                            </ToolGroup>
                            <ToolGroup><Tool name="wand"/></ToolGroup>
                            <ToolGroup><Tool name="next"/><Tool name="prev"/><Caret color="#333"/></ToolGroup>
                            <ToolGroup><Tool name="form"/></ToolGroup>
                            <ToolGroup><Tool name="help"/><Tool name="stack"/></ToolGroup>
                            <ToolGroup><Check><input type="checkbox"/>自动保存</Check></ToolGroup>
                            <Devices>
                                <Device $active><Tool name="pc"/>PC</Device>
                                <Device><Tool name="mobile"/>Mobile</Device>
                            </Devices>
                        </Toolbar>
                        <Tabs $dark>
                            <Tab $active $dark>设计</Tab>
                            <Tab $dark>脚本</Tab>
                        </Tabs>
                        <Canvas>
                            <Frame>
                                <Sheet>
                                    <ActionBar>
                                        <Actions>
                                            {actions.map(([icon, name]) =>
                                                <ActionButton key={name}><Svg size={9}>{actionIcons[icon]}</Svg>{name}</ActionButton>
                                            )}
                                        </Actions>
                                        <NextRow/>
                                    </ActionBar>
                                    <TitleBox>(C)Text</TitleBox>
                                    <FormArea/>
                                    <RichEditor/>
                                    <AttachmentArea/>
                                </Sheet>
                                <Track>
                                    <svg width="5" height="4" viewBox="0 0 5 4"><path d="M0 4h5L2.500 0z" fill="#aaa"/></svg>
                                    <Thumb $size="78%"/>
                                    <svg width="5" height="4" viewBox="0 0 5 4"><path d="M0 0h5L2.500 4z" fill="#aaa"/></svg>
                                </Track>
                                <Track $row>
                                    <svg width="4" height="5" viewBox="0 0 4 5"><path d="M4 0v5L0 2.500z" fill="#aaa"/></svg>
                                    <Thumb $row $size="95%"/>
                                    <svg width="4" height="5" viewBox="0 0 4 5"><path d="M0 0v5l4-2.500z" fill="#aaa"/></svg>
                                </Track>
                            </Frame>
                        </Canvas>
                        <Refresh title="刷新">
                            <Svg size={15} strokeWidth="1.800"><path d="M3 5v5c0 2 1 3.500 3 3.500h4M13 11V6c0-2-1-3.500-3-3.500H6"/><path d="M0 6l3-4 3 4zM10 10.500h6l-3 4z" {...solid}/></Svg>
                        </Refresh>
                    </Designer>

                    <Inspector>
                        <BarTitle>
                            属性
                            <svg width="9" height="8" viewBox="0 0 9 8"><path d="M0 0h9v8H0z" fill="#ddd"/><path d="M2 2h5v2H2z" fill="#444"/></svg>
                        </BarTitle>
                        <InspectorBody>
                            <TreePanel/>
                            <Divider/>
                            <Tabs>
                                <Tab $active>基本</Tab>
                                <Tab>事件</Tab>
                                <Tab>消息</Tab>
                                <Tab>HTML</Tab>
                                <Tab>JSON</Tab>
                            </Tabs>
                            <PropertyPanel/>
                        </InspectorBody>
                    </Inspector>
                </Workspace>
            </Main>
        </Shell>
    );
}
